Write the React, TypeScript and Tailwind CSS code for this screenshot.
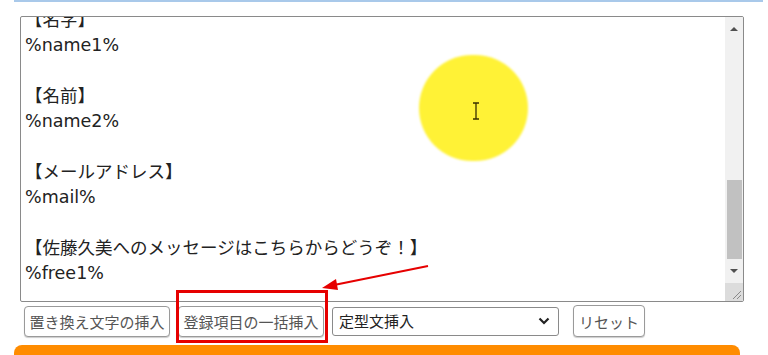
import React from "react";

const lines: string[] = [
  "【名字】",
  "%name1%",
  "",
  "【名前】",
  "%name2%",
  "",
  "【メールアドレス】",
  "%mail%",
  "",
  "【佐藤久美へのメッセージはこちらからどうぞ！】",
  "%free1%",
  "",
];

const font = { fontFamily: '"DejaVu Sans", "Noto Sans CJK JP", sans-serif' };
const btnFont = { fontFamily: '"Noto Sans CJK JP", "DejaVu Sans", sans-serif' };

export default function App() {
  return (
    <div className="relative w-[768px] h-[355px] overflow-hidden bg-white">
      <div className="ml-[14px] w-[749px] h-[2px] bg-[#a9c9ea]" />
      <div className="mt-[14px] ml-[20px] w-[724px] h-[286px] border border-[#8a8a8a] rounded-[2px] flex overflow-hidden">
        <div className="flex-1 overflow-hidden pl-[4px]">
          <div className="mt-[-9px] text-[17.5px] leading-[25.3px] text-[#222]" style={font}>
            {lines.map((l, i) => (
              <div key={i} className="h-[25.3px] whitespace-nowrap">
                {l}
              </div>
            ))}
          </div>
        </div>
        <div className="w-[18px] bg-[#f1f1f1] flex flex-col items-center">
          <div className="h-[18px] w-full flex items-center justify-center mt-[3px]">
            <div className="w-0 h-0 border-l-[4px] border-r-[4px] border-b-[4px] border-l-transparent border-r-transparent border-b-[#505050]" />
          </div>
          <div className="flex-1 w-full" />
          <div className="w-[15px] h-[79px] bg-[#c1c1c1]" />
          <div className="h-[24px] w-full flex items-center justify-center">
            <div className="w-0 h-0 border-l-[4px] border-r-[4px] border-t-[4px] border-l-transparent border-r-transparent border-t-[#505050]" />
          </div>
          <div className="h-[18px] w-full bg-[#dcdcdc] relative">
            <svg className="absolute right-[1px] bottom-[1px]" width="12" height="12" viewBox="0 0 12 12">
              <line x1="11" y1="3" x2="3" y2="11" stroke="#888" strokeWidth="1" />
              <line x1="11" y1="7" x2="7" y2="11" stroke="#888" strokeWidth="1" />
            </svg>
          </div>
        </div>
      </div>
      <div className="mt-[3px] ml-[24px] flex items-center text-[15px]" style={btnFont}>
        <button className="w-[146px] h-[31px] border border-[#9a9a9a] rounded-[4px] bg-white text-[#555] shadow-[0_1px_1px_rgba(0,0,0,0.2)] leading-none">
          置き換え文字の挿入
        </button>
        <button className="ml-[8px] w-[146px] h-[31px] border border-[#9a9a9a] rounded-[4px] bg-white text-[#555] shadow-[0_1px_1px_rgba(0,0,0,0.2)] leading-none">
          登録項目の一括挿入
        </button>
        <div className="ml-[8px] w-[227px] h-[29px] border border-[#8a8a8a] rounded-[3px] bg-white flex items-center pl-[6px] pr-[8px] text-[#222]">
          <span className="flex-1">定型文挿入</span>
          <svg width="12" height="8" viewBox="0 0 12 8">
            <path d="M1.5 1.5 L6 6 L10.5 1.5" fill="none" stroke="#222" strokeWidth="2.2" />
          </svg>
        </div>
        <button className="ml-[14px] w-[72px] h-[32px] border border-[#9a9a9a] rounded-[4px] bg-white text-[#555] shadow-[0_1px_1px_rgba(0,0,0,0.2)] leading-none">
          リセット
        </button>
      </div>
      <div className="mt-[8px] ml-[14px] w-[726px] h-[20px] rounded-t-[8px] bg-[#ff8c00]" />

      {/* annotations */}
      <div className="absolute left-[419px] top-[55px] w-[109px] h-[106px] rounded-full bg-[#fff236] blur-[1px]" />
      <svg className="absolute left-[470px] top-[102px]" width="12" height="18" viewBox="0 0 12 18">
        <path d="M3 1 H9 M6 1 V17 M3 17 H9" stroke="#3a3000" strokeWidth="1.3" fill="none" />
      </svg>
      <div className="absolute left-[176px] top-[290px] w-[152px] h-[53px] border-[3px] border-[#e60000]" />
      <svg className="absolute left-0 top-0 pointer-events-none" width="768" height="355">
        <line x1="428" y1="266" x2="334" y2="285" stroke="#e60000" strokeWidth="2.2" />
        <polygon points="322,288 336,279 338,290" fill="#e60000" />
      </svg>
    </div>
  );
}
